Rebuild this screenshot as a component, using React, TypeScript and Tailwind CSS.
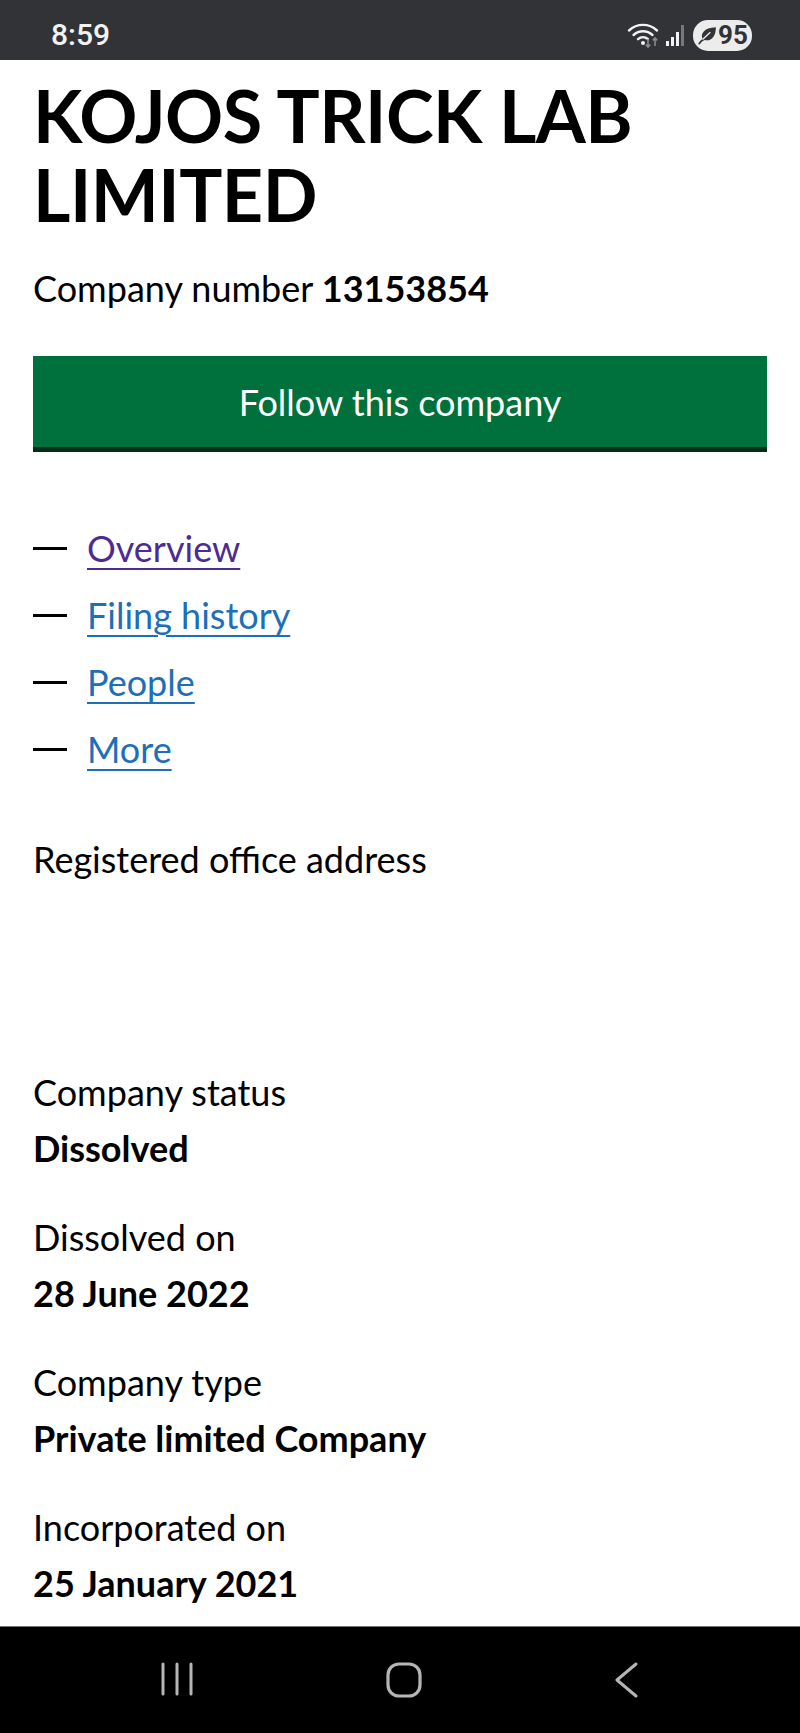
import React from 'react';

const navLinks = [
  { label: 'Overview', color: 'text-[#4c2c92] decoration-[#4c2c92]' },
  { label: 'Filing history', color: 'text-[#1d70b8] decoration-[#1d70b8]' },
  { label: 'People', color: 'text-[#1d70b8] decoration-[#1d70b8]' },
  { label: 'More', color: 'text-[#1d70b8] decoration-[#1d70b8]' },
];

const facts = [
  { label: 'Company status', value: 'Dissolved' },
  { label: 'Dissolved on', value: '28 June 2022' },
  { label: 'Company type', value: 'Private limited Company' },
  { label: 'Incorporated on', value: '25 January 2021' },
];

const StatusIcons = () => (
  <div className="flex items-center">
    <svg width="34" height="26" viewBox="0 0 34 26" fill="none" className="mr-[2px]">
      <path d="M2 8.5C10 1 22 1 30 8.5" stroke="#f2f2f2" strokeWidth="2.4" strokeLinecap="round" />
      <path d="M6.5 13C12 8 20 8 25.5 13" stroke="#f2f2f2" strokeWidth="2.4" strokeLinecap="round" />
      <path d="M11 17.2C14 14.6 18 14.6 21 17.2" stroke="#f2f2f2" strokeWidth="2.4" strokeLinecap="round" />
      <circle cx="16" cy="21" r="2" fill="#f2f2f2" />
      <path d="M21 17V25M18.8 22.6L21 25L23.2 22.6" stroke="#8a8a8c" strokeWidth="1.6" />
      <path d="M28 24V16M25.8 18.4L28 16L30.2 18.4" stroke="#8a8a8c" strokeWidth="1.6" />
    </svg>
    <svg width="22" height="24" viewBox="0 0 22 24" className="ml-[2px] mr-[6px]">
      <rect x="1" y="18" width="3" height="5" fill="#f2f2f2" />
      <rect x="6" y="14" width="3" height="9" fill="#f2f2f2" />
      <rect x="11" y="9" width="3" height="14" fill="#f2f2f2" />
      <rect x="16" y="2" width="3" height="21" fill="#77787b" />
    </svg>
    <div className="flex h-[31px] w-[59px] items-center justify-center rounded-[15px] bg-[#ececec] text-[#323337]">
      <svg width="20" height="20" viewBox="0 0 18 18" className="mr-[1px]">
        <path d="M1 17C2 15 3.500 13.500 5 12.500C3 8 6 2.500 17 2C17 11 12 15 7 13.500C5 14.500 3.500 15.500 2.500 17.500Z" fill="#323337" />
        <path d="M5 13L12 6.500" stroke="#ececec" strokeWidth="1.200" />
      </svg>
      <span className="text-[26px] font-bold leading-none font-['Roboto',sans-serif]">95</span>
    </div>
  </div>
);

export default function App() {
  return (
    <div className="flex h-[1733px] w-[800px] flex-col overflow-hidden bg-white font-['Lato',sans-serif] text-[#0b0c0c]">
      <div className="flex h-[60px] shrink-0 items-center justify-between bg-[#323337] pl-[51px] pr-[48px] pt-[10px]">
        <span className="font-['Roboto',sans-serif] text-[30px] font-medium leading-none text-[#f2f2f2]">8:59</span>
        <StatusIcons />
      </div>

      <div className="flex-1 overflow-hidden px-[33px] pt-[16px]">
        <h1 className="text-[72px] font-bold leading-[79px] tracking-[-0.5px] text-black">
          KOJOS TRICK LAB
          <br />
          LIMITED
        </h1>
        <p className="mt-[28px] text-[36px] leading-[52px] text-black">
          Company number <span className="font-bold">13153854</span>
        </p>
        <button className="mt-[42px] flex h-[96px] w-[734px] items-center justify-center border-b-[5px] border-[#002d18] bg-[#00703c] text-[36px] text-white">
          Follow this company
        </button>

        <ul className="mt-[70px] flex flex-col gap-[15px]">
          {navLinks.map((link) => (
            <li key={link.label} className="flex h-[52px] items-center text-[36px]">
              <span className="mr-[20px] h-[3px] w-[34px] bg-black" />
              <a href="#" className={`underline decoration-2 underline-offset-[6px] ${link.color}`}>
                {link.label}
              </a>
            </li>
          ))}
        </ul>

        <p className="mt-[58px] text-[36px] leading-[52px] text-black">Registered office address</p>

        <dl className="mt-[181px] flex flex-col gap-[37px]">
          {facts.map((fact) => (
            <div key={fact.label} className="flex flex-col gap-[4px] text-[36px] leading-[52px] text-black">
              <dt>{fact.label}</dt>
              <dd className="font-bold">{fact.value}</dd>
            </div>
          ))}
        </dl>
      </div>

      <div className="flex h-[107px] shrink-0 items-start justify-between border-t border-[#777] bg-black pl-[160px] pr-[161px] pt-[35px]">
        <svg width="34" height="34" viewBox="0 0 34 34" fill="none" stroke="#b5b5b5" strokeWidth="3" strokeLinecap="round">
          <path d="M3 2V32M17 2V32M31 2V32" />
        </svg>
        <svg width="36" height="36" viewBox="0 0 36 36" fill="none" stroke="#b5b5b5" strokeWidth="3.200">
          <rect x="2" y="2" width="32" height="32" rx="11" />
        </svg>
        <svg width="25" height="36" viewBox="0 0 25 36" fill="none" stroke="#b5b5b5" strokeWidth="3" strokeLinecap="round" strokeLinejoin="round">
          <path d="M22 2L3 18L22 34" />
        </svg>
      </div>
    </div>
  );
}
